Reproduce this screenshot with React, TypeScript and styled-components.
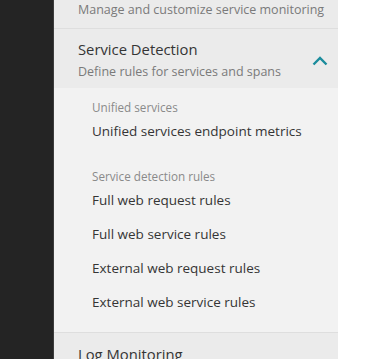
import React from 'react';
import styled, { createGlobalStyle } from 'styled-components';

const GlobalStyle = createGlobalStyle`
  html, body {
    margin: 0;
    padding: 0;
    background: #ffffff;
    font-family: 'Open Sans', 'Noto Sans', sans-serif;
  }
`;

const Layout = styled.div`
  display: flex;
  height: 359px;
  overflow: hidden;
`;

const Sidebar = styled.div`
  width: 53px;
  flex-shrink: 0;
  background: #242424;
  border-right: 1px solid #3c3c3c;
`;

const Panel = styled.div`
  width: 284px;
  flex-shrink: 0;
  background: #ebebeb;
  display: flex;
  flex-direction: column;
`;

const Section = styled.div<{ $top?: boolean }>`
  flex-shrink: 0;
  border-top: ${(p) => (p.$top ? 'none' : '1px solid #dedede')};
  margin-top: ${(p) => (p.$top ? '-2px' : '0')};
`;

const SectionHeader = styled.div<{ $pad: string }>`
  display: flex;
  align-items: center;
  justify-content: space-between;
  padding: ${(p) => p.$pad};
`;

const HeaderText = styled.div`
  display: flex;
  flex-direction: column;
`;

const SectionTitle = styled.div`
  font-size: 14.8px;
  line-height: 22px;
  color: #353535;
`;

const SectionSubtitle = styled.div`
  font-size: 12.5px;
  line-height: 23px;
  color: #7a7a7a;
  white-space: nowrap;
`;

const Chevron = styled.svg`
  width: 16px;
  height: 16px;
  flex-shrink: 0;
`;

const SubMenu = styled.div`
  background: #f2f2f2;
  padding: 9px 0 13px 38px;
  display: flex;
  flex-direction: column;
`;

const Group = styled.div`
  display: flex;
  flex-direction: column;
  & + & {
    margin-top: 18px;
  }
`;

const GroupLabel = styled.div`
  font-size: 11.7px;
  line-height: 20px;
  color: #8a8a8a;
`;

const Item = styled.div`
  font-size: 13.5px;
  line-height: 34px;
  color: #353535;
  margin-top: -3px;
  & + & {
    margin-top: 0;
  }
`;

const groups = [
  { label: 'Unified services', items: ['Unified services endpoint metrics'] },
  {
    label: 'Service detection rules',
    items: [
      'Full web request rules',
      'Full web service rules',
      'External web request rules',
      'External web service rules',
    ],
  },
];

export default function App() {
  return (
    <>
      <GlobalStyle />
      <Layout>
        <Sidebar />
        <Panel>
          <Section $top>
            <SectionHeader $pad="0 14px 7px 24px">
              <SectionSubtitle>Manage and customize service monitoring</SectionSubtitle>
            </SectionHeader>
          </Section>
          <Section>
            <SectionHeader $pad="9px 10px 5px 24px">
              <HeaderText>
                <SectionTitle>Service Detection</SectionTitle>
                <SectionSubtitle>Define rules for services and spans</SectionSubtitle>
              </HeaderText>
              <Chevron viewBox="0 0 16 16">
                <path d="M1.5 11.5 L8 5 L14.5 11.5" fill="none" stroke="#1b8c9c" strokeWidth="2.4" />
              </Chevron>
            </SectionHeader>
            <SubMenu>
              {groups.map((g) => (
                <Group key={g.label}>
                  <GroupLabel>{g.label}</GroupLabel>
                  {g.items.map((i) => (
                    <Item key={i}>{i}</Item>
                  ))}
                </Group>
              ))}
            </SubMenu>
          </Section>
          <Section>
            <SectionHeader $pad="10px 10px 10px 24px">
              <HeaderText>
                <SectionTitle>Log Monitoring</SectionTitle>
              </HeaderText>
            </SectionHeader>
          </Section>
        </Panel>
      </Layout>
    </>
  );
}
